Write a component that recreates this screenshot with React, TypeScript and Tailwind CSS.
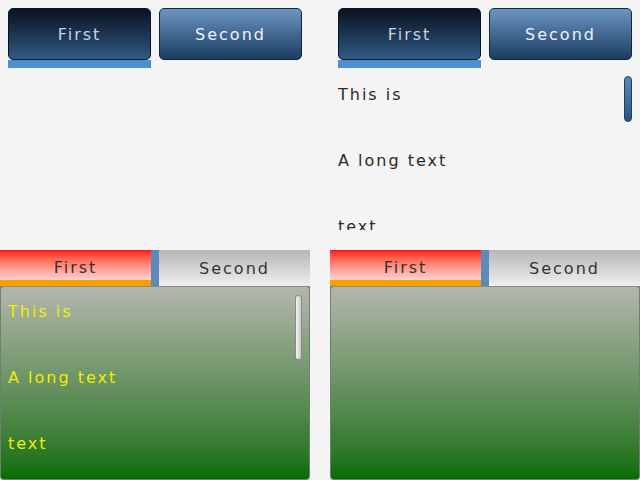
import React from 'react';

const font = { fontFamily: '"DejaVu Sans", Verdana, sans-serif' };

function TopTabs() {
  return (
    <div className="flex gap-2 px-2 pt-2">
      <div className="flex w-[143px] flex-col">
        <button className="h-[52px] w-full rounded-[5px] border border-[#0a1420] bg-gradient-to-b from-[#0b1321] to-[#2f5b86] pt-[1px] text-[16px] tracking-[2px] text-[#c4d4e4]">
          First
        </button>
        <div className="h-[8px] w-full bg-[#4f8fd0]" />
      </div>
      <button className="h-[52px] w-[143px] rounded-[5px] border border-[#142638] bg-gradient-to-b from-[#6c97c2] to-[#1d3d63] pt-[1px] text-[16px] tracking-[2px] text-[#eef3f8]">
        Second
      </button>
    </div>
  );
}

function Lines({ color }: { color: string }) {
  return (
    <>
      {['This is', 'A long text', 'text'].map((t) => (
        <div key={t} className={`h-[66px] text-[16px] leading-[20px] tracking-[2px] ${color}`}>
          {t}
        </div>
      ))}
    </>
  );
}

function BottomTabs({ withText }: { withText: boolean }) {
  return (
    <div className="flex h-full flex-col bg-[linear-gradient(to_bottom,#5b8abb_0,#5b8abb_40px,transparent_40px)]">
      <div className="flex h-[36px] gap-[8px] bg-[#5b8abb]">
        <div className="flex w-[151px] flex-col">
          <div className="flex h-[30px] items-center justify-center bg-gradient-to-b from-[#ff0000] to-[#fad2d2] pt-[6px] text-[16px] tracking-[2px] text-[#333]">
            First
          </div>
          <div className="h-[6px] bg-[#f5a000]" />
        </div>
        <div className="flex flex-1 items-center justify-center bg-gradient-to-b from-[#b6b6b6] to-[#f0f0f0] pt-[1px] text-[16px] tracking-[2px] text-[#333]">
          Second
        </div>
      </div>
      <div className="relative flex-1 overflow-hidden rounded-[4px] border border-[#6f7f70] border-t-[#8a8a8a] bg-gradient-to-b from-[#b4b6ae] to-[#006e00] px-[7px] pt-[15px]">
        {withText && (
          <>
            <Lines color="text-[#eeee00]" />
            <div className="absolute right-[7px] top-[8px] h-[65px] w-[7px] rounded-[3px] border border-[#8a8a8a] bg-gradient-to-r from-[#f4f4f4] to-[#c8c8c8]" />
          </>
        )}
      </div>
    </div>
  );
}

export default function App() {
  return (
    <div
      className="grid h-[480px] w-[640px] grid-cols-[310px_310px] grid-rows-[250px_230px] gap-x-[20px] overflow-hidden bg-[#f4f4f4]"
      style={font}
    >
      <div>
        <TopTabs />
      </div>
      <div className="flex flex-col">
        <TopTabs />
        <div className="relative h-[162px] overflow-hidden px-2 pt-[17px]">
          <Lines color="text-[#2a2a2a]" />
          <div className="absolute right-[8px] top-[8px] h-[46px] w-[8px] rounded-full border border-[#1f3e63] bg-gradient-to-b from-[#5d8bb9] to-[#29527f]" />
        </div>
      </div>
      <BottomTabs withText />
      <BottomTabs withText={false} />
    </div>
  );
}
